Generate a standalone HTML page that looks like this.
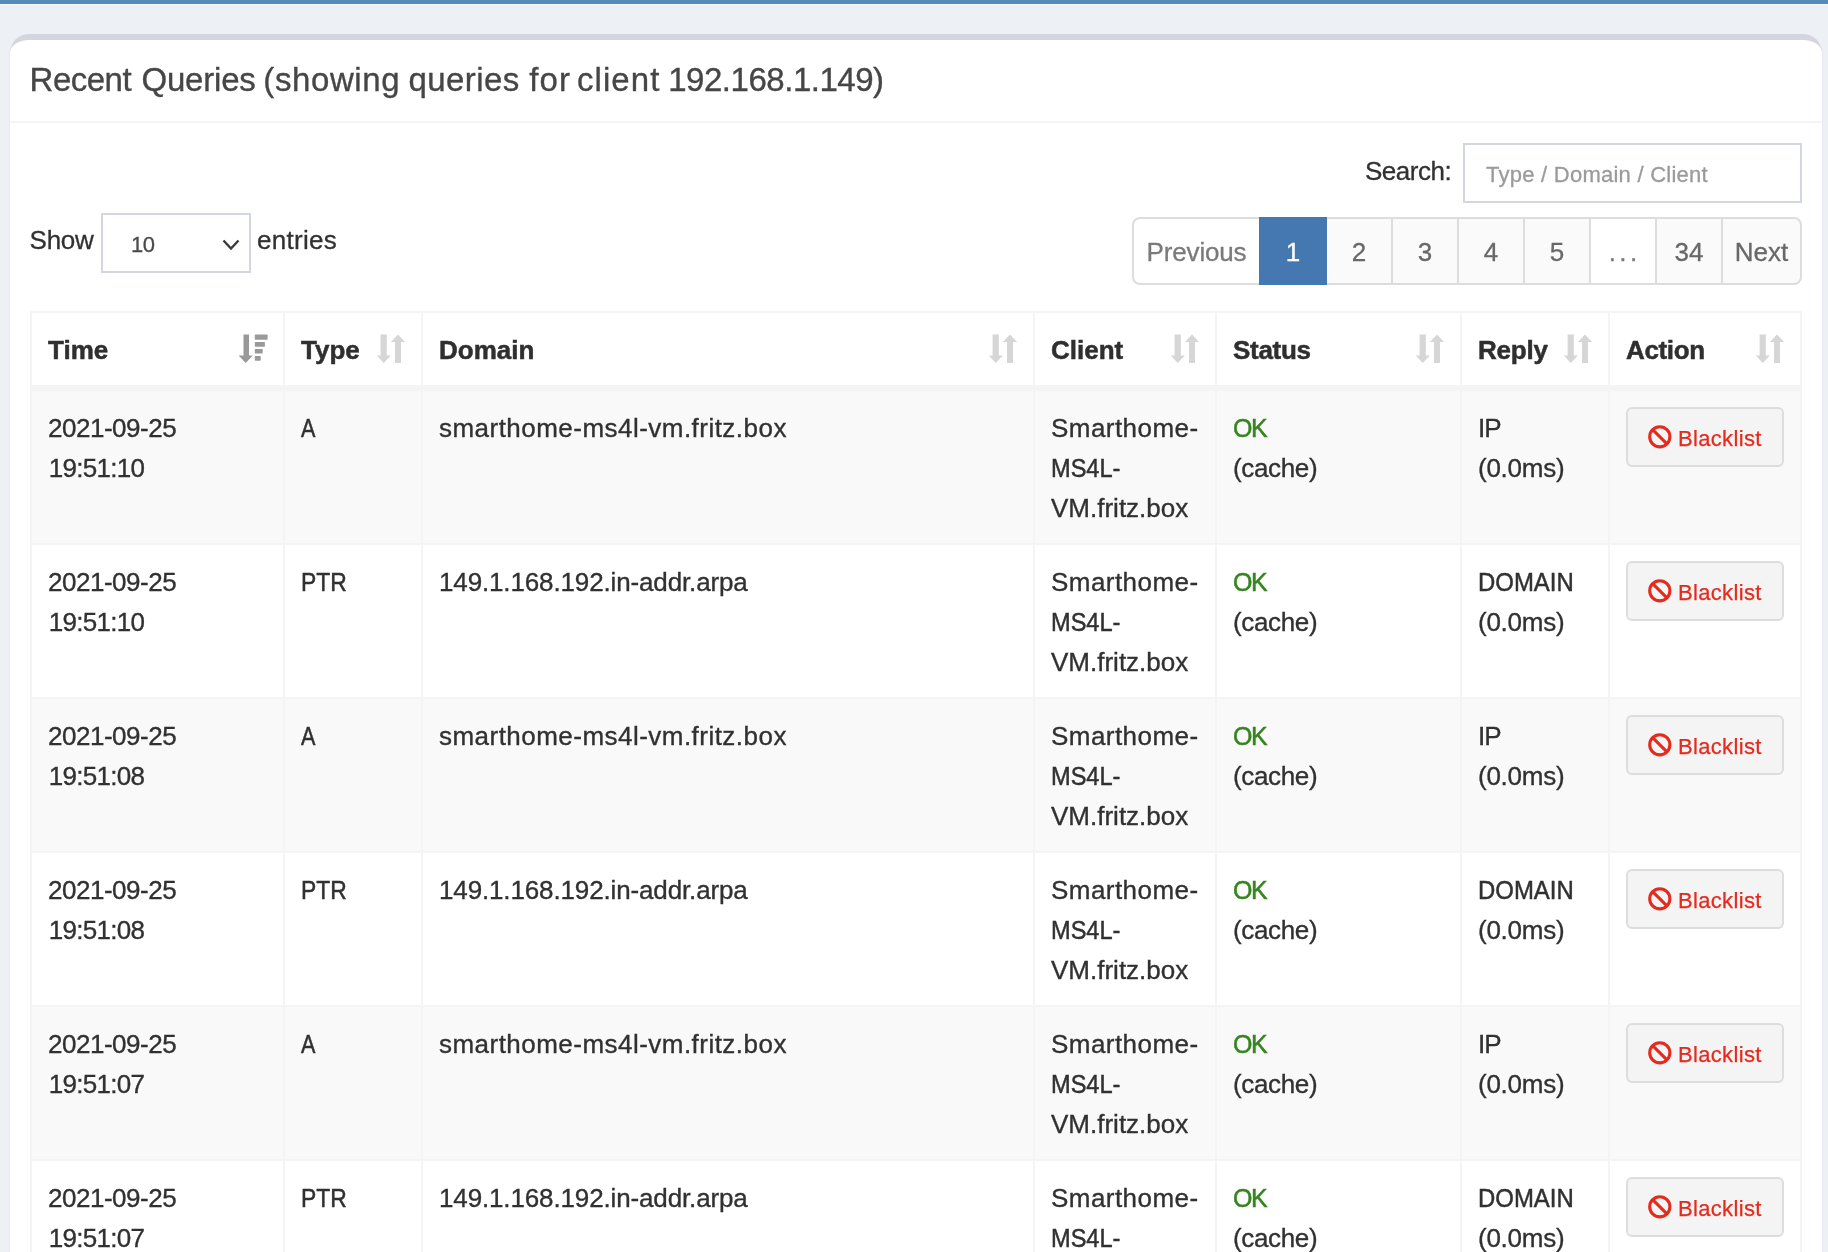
<!DOCTYPE html>
<html>
<head>
<meta charset="utf-8">
<title>Pi-hole - Query Log</title>
<style>
*{box-sizing:border-box;}
html,body{margin:0;padding:0;}
body{width:1828px;height:1252px;overflow:hidden;background:#edf0f5;font-family:"Liberation Sans",sans-serif;font-size:26px;line-height:40px;color:#313131;position:relative;will-change:transform;}
.topbar{position:absolute;left:0;top:0;width:1828px;height:4px;background:#548bb9;}
.topbar:after{content:"";position:absolute;left:0;top:4px;width:100%;height:1px;background:#f6f8fb;}
.box{position:absolute;left:10px;top:34px;width:1812px;height:1300px;background:#fff;border-top:6px solid #d3d6de;border-radius:19px 19px 0 0;box-shadow:0 2px 2px rgba(0,0,0,.1);}
.title{position:absolute;left:0;top:57.5px;font-size:33px;line-height:44px;color:#464646;white-space:nowrap;}
.title span{position:absolute;top:0;-webkit-text-stroke:.35px;}
.hline{position:absolute;left:10px;top:121px;width:1812px;height:2px;background:#f4f4f4;}
.abs{position:absolute;white-space:nowrap;-webkit-text-stroke:.3px;}
/* controls */
.search-lbl{left:1365px;top:151px;letter-spacing:-.5px;}
.search-inp{left:1463px;top:143px;width:339px;height:60px;border:2px solid #d3d6de;background:#fff;}
.search-inp span{position:absolute;left:21px;top:10px;font-size:22px;color:#9a9a9a;letter-spacing:.25px;}
.show-lbl{left:29.6px;top:220px;letter-spacing:-.3px;}
.sel{left:101px;top:213px;width:150px;height:60px;border:2px solid #d3d6de;background:#fff;}
.sel span{position:absolute;left:28px;top:10px;font-size:22px;color:#4a4a4a;letter-spacing:-.5px;}
.sel svg{position:absolute;left:119px;top:24px;}
.entries-lbl{left:257px;top:220px;letter-spacing:.3px;}
/* pagination */
.pag{left:1132px;top:217px;height:68px;display:flex;}
.pag div{height:68px;border:2px solid #dddddd;background:#fafafa;color:#686868;text-align:center;line-height:66px;margin-left:-2px;width:68px;}
.pag div.first{margin-left:0;width:129px;background:#fff;color:#7a7a7a;border-radius:8px 0 0 8px;letter-spacing:-.15px;}
.pag div.act{background:#4578b1;border-color:#4578b1;color:#fff;position:relative;z-index:2;}
.pag div.dis{background:#fff;color:#7a7a7a;}
.pag div.last{width:81px;border-radius:0 8px 8px 0;}
/* table */
table{position:absolute;left:30px;top:311px;width:1772px;border-collapse:separate;border-spacing:0;border:2px solid #f4f4f4;border-right-width:0;border-bottom-width:0;table-layout:fixed;}
th,td{border:2px solid #f4f4f4;border-left-width:0;border-top-width:0;text-align:left;vertical-align:top;padding:17px 16px 15px 16px;font-weight:normal;overflow:hidden;white-space:nowrap;}
th{-webkit-text-stroke:.5px #2f2f2f;font-weight:bold;height:76px;border-bottom-width:4px;position:relative;color:#2f2f2f;}
td{-webkit-text-stroke:.35px;height:154px;border-top-width:2px;border-bottom-width:0;}
tr.odd td{background:#f9f9f9;}
th svg{position:absolute;right:15px;top:21px;}
.ok{color:#35841f;letter-spacing:-1.5px;}
.btn{display:block;width:158px;height:60px;margin-top:-1px;border:2px solid #dddddd;border-radius:6px;background:#f4f4f4;color:#e42b1e;font-size:22px;line-height:56px;position:relative;}
.btn svg{position:absolute;left:20px;top:16px;}
.btn span{position:absolute;left:50px;top:2px;letter-spacing:.33px;-webkit-text-stroke:.25px #e42b1e;}

.t1{letter-spacing:-.48px;}
.t2{letter-spacing:-.7px;position:relative;left:.7px;}
.sx{display:inline-block;transform-origin:0 50%;-webkit-text-stroke-width:.5px;}
.tyA{transform:scaleX(.83);}
.tyP{transform:scaleX(.88);}
.d1{letter-spacing:.47px;}
.d2{letter-spacing:-.14px;}
.c1{letter-spacing:.45px;}
.c2{transform:scaleX(.907);}
.ok{transform:scaleX(.96);}
.s2{letter-spacing:-.35px;}
.r1{letter-spacing:-1px;}
.r2{transform:scaleX(.92);}
.r3{letter-spacing:-.25px;}
.h5{letter-spacing:-.3px;}
.h6{letter-spacing:-.2px;}
.h7{letter-spacing:-.35px;}
.ell{letter-spacing:3.4px;margin-left:3.4px;}
</style>
</head>
<body>
<div class="topbar"></div>
<div class="box"></div>
<div class="title"><span style="left:29.6px;letter-spacing:-0.52px">Recent</span><span style="left:141.5px;letter-spacing:-0.2px">Queries</span><span style="left:263.3px;letter-spacing:0.6px">(showing</span><span style="left:408.5px;letter-spacing:0.42px">queries</span><span style="left:529.3px;letter-spacing:1.15px">for</span><span style="left:576.9px;letter-spacing:1.1px">client</span><span style="left:668.2px;letter-spacing:-0.47px">192.168.1.149)</span></div>
<div class="hline"></div>

<div class="abs search-lbl">Search:</div>
<div class="abs search-inp"><span>Type / Domain / Client</span></div>

<div class="abs show-lbl">Show</div>
<div class="abs sel"><span>10</span><svg width="18" height="12" viewBox="0 0 18 12"><path d="M1.5 1.5 L9 9.5 L16.5 1.5" fill="none" stroke="#3a3a3a" stroke-width="2.4"/></svg></div>
<div class="abs entries-lbl">entries</div>

<div class="abs pag">
<div class="first">Previous</div><div class="act">1</div><div>2</div><div>3</div><div>4</div><div>5</div><div class="dis"><span class="ell">...</span></div><div>34</div><div class="last">Next</div>
</div>

<table>
<colgroup><col style="width:253px"><col style="width:138px"><col style="width:612px"><col style="width:182px"><col style="width:245px"><col style="width:148px"><col style="width:192px"></colgroup>
<thead>
<tr><th><span class="h1">Time</span><svg class="sd" width="30" height="30" viewBox="0 0 30 30"><g transform="translate(0.6,0.5)" fill="#999999"><path d="M4.9 0h5.5v21h3.8l-7.1 7.4l-7.1-7.4h4.9z"/><rect x="16.2" y="0" width="12.8" height="5.2" rx="0.7"/><rect x="16.2" y="7.4" width="10.1" height="4.9" rx="0.7"/><rect x="16.2" y="14.5" width="7.9" height="4.5" rx="0.7"/><rect x="16.2" y="21.6" width="5.9" height="4.6" rx="0.7"/></g></svg></th><th><span class="h2">Type</span><svg class="so" width="30" height="30" viewBox="0 0 30 30"><path transform="translate(0.7,0.5)" fill="#d6d6d6" d="M3.9 0h6.2v21h4.1l-7.1 7.4l-7.1-7.4h3.9z M21.3 0l7.1 7.4h-4.1v21h-6v-21h-4.1z"/></svg></th><th><span class="h3">Domain</span><svg class="so" width="30" height="30" viewBox="0 0 30 30"><path transform="translate(0.7,0.5)" fill="#d6d6d6" d="M3.9 0h6.2v21h4.1l-7.1 7.4l-7.1-7.4h3.9z M21.3 0l7.1 7.4h-4.1v21h-6v-21h-4.1z"/></svg></th><th><span class="h4">Client</span><svg class="so" width="30" height="30" viewBox="0 0 30 30"><path transform="translate(0.7,0.5)" fill="#d6d6d6" d="M3.9 0h6.2v21h4.1l-7.1 7.4l-7.1-7.4h3.9z M21.3 0l7.1 7.4h-4.1v21h-6v-21h-4.1z"/></svg></th><th><span class="h5">Status</span><svg class="so" width="30" height="30" viewBox="0 0 30 30"><path transform="translate(0.7,0.5)" fill="#d6d6d6" d="M3.9 0h6.2v21h4.1l-7.1 7.4l-7.1-7.4h3.9z M21.3 0l7.1 7.4h-4.1v21h-6v-21h-4.1z"/></svg></th><th><span class="h6">Reply</span><svg class="so" width="30" height="30" viewBox="0 0 30 30"><path transform="translate(0.7,0.5)" fill="#d6d6d6" d="M3.9 0h6.2v21h4.1l-7.1 7.4l-7.1-7.4h3.9z M21.3 0l7.1 7.4h-4.1v21h-6v-21h-4.1z"/></svg></th><th><span class="h7">Action</span><svg class="so" width="30" height="30" viewBox="0 0 30 30"><path transform="translate(0.7,0.5)" fill="#d6d6d6" d="M3.9 0h6.2v21h4.1l-7.1 7.4l-7.1-7.4h3.9z M21.3 0l7.1 7.4h-4.1v21h-6v-21h-4.1z"/></svg></th></tr>
</thead>
<tbody id="tb">
<tr class="odd"><td><span class="t1">2021-09-25</span><br><span class="t2">19:51:10</span></td><td><span class="sx tyA">A</span></td><td><span class="d1">smarthome-ms4l-vm.fritz.box</span></td><td><span class="c1">Smarthome-</span><br><span class="sx c2">MS4L-</span><br><span class="c3">VM.fritz.box</span></td><td><span class="sx ok">OK</span><br><span class="s2">(cache)</span></td><td><span class="r1">IP</span><br><span class="r3">(0.0ms)</span></td><td><div class="btn"><svg width="26" height="26" viewBox="0 0 26 26"><circle cx="11.8" cy="11.8" r="10.1" fill="none" stroke="#e42b1e" stroke-width="3.1"/><path d="M4.66 4.66 L18.94 18.94" stroke="#e42b1e" stroke-width="3.1"/></svg><span>Blacklist</span></div></td></tr>
<tr class="even"><td><span class="t1">2021-09-25</span><br><span class="t2">19:51:10</span></td><td><span class="sx tyP">PTR</span></td><td><span class="d2">149.1.168.192.in-addr.arpa</span></td><td><span class="c1">Smarthome-</span><br><span class="sx c2">MS4L-</span><br><span class="c3">VM.fritz.box</span></td><td><span class="sx ok">OK</span><br><span class="s2">(cache)</span></td><td><span class="sx r2">DOMAIN</span><br><span class="r3">(0.0ms)</span></td><td><div class="btn"><svg width="26" height="26" viewBox="0 0 26 26"><circle cx="11.8" cy="11.8" r="10.1" fill="none" stroke="#e42b1e" stroke-width="3.1"/><path d="M4.66 4.66 L18.94 18.94" stroke="#e42b1e" stroke-width="3.1"/></svg><span>Blacklist</span></div></td></tr>
<tr class="odd"><td><span class="t1">2021-09-25</span><br><span class="t2">19:51:08</span></td><td><span class="sx tyA">A</span></td><td><span class="d1">smarthome-ms4l-vm.fritz.box</span></td><td><span class="c1">Smarthome-</span><br><span class="sx c2">MS4L-</span><br><span class="c3">VM.fritz.box</span></td><td><span class="sx ok">OK</span><br><span class="s2">(cache)</span></td><td><span class="r1">IP</span><br><span class="r3">(0.0ms)</span></td><td><div class="btn"><svg width="26" height="26" viewBox="0 0 26 26"><circle cx="11.8" cy="11.8" r="10.1" fill="none" stroke="#e42b1e" stroke-width="3.1"/><path d="M4.66 4.66 L18.94 18.94" stroke="#e42b1e" stroke-width="3.1"/></svg><span>Blacklist</span></div></td></tr>
<tr class="even"><td><span class="t1">2021-09-25</span><br><span class="t2">19:51:08</span></td><td><span class="sx tyP">PTR</span></td><td><span class="d2">149.1.168.192.in-addr.arpa</span></td><td><span class="c1">Smarthome-</span><br><span class="sx c2">MS4L-</span><br><span class="c3">VM.fritz.box</span></td><td><span class="sx ok">OK</span><br><span class="s2">(cache)</span></td><td><span class="sx r2">DOMAIN</span><br><span class="r3">(0.0ms)</span></td><td><div class="btn"><svg width="26" height="26" viewBox="0 0 26 26"><circle cx="11.8" cy="11.8" r="10.1" fill="none" stroke="#e42b1e" stroke-width="3.1"/><path d="M4.66 4.66 L18.94 18.94" stroke="#e42b1e" stroke-width="3.1"/></svg><span>Blacklist</span></div></td></tr>
<tr class="odd"><td><span class="t1">2021-09-25</span><br><span class="t2">19:51:07</span></td><td><span class="sx tyA">A</span></td><td><span class="d1">smarthome-ms4l-vm.fritz.box</span></td><td><span class="c1">Smarthome-</span><br><span class="sx c2">MS4L-</span><br><span class="c3">VM.fritz.box</span></td><td><span class="sx ok">OK</span><br><span class="s2">(cache)</span></td><td><span class="r1">IP</span><br><span class="r3">(0.0ms)</span></td><td><div class="btn"><svg width="26" height="26" viewBox="0 0 26 26"><circle cx="11.8" cy="11.8" r="10.1" fill="none" stroke="#e42b1e" stroke-width="3.1"/><path d="M4.66 4.66 L18.94 18.94" stroke="#e42b1e" stroke-width="3.1"/></svg><span>Blacklist</span></div></td></tr>
<tr class="even"><td><span class="t1">2021-09-25</span><br><span class="t2">19:51:07</span></td><td><span class="sx tyP">PTR</span></td><td><span class="d2">149.1.168.192.in-addr.arpa</span></td><td><span class="c1">Smarthome-</span><br><span class="sx c2">MS4L-</span><br><span class="c3">VM.fritz.box</span></td><td><span class="sx ok">OK</span><br><span class="s2">(cache)</span></td><td><span class="sx r2">DOMAIN</span><br><span class="r3">(0.0ms)</span></td><td><div class="btn"><svg width="26" height="26" viewBox="0 0 26 26"><circle cx="11.8" cy="11.8" r="10.1" fill="none" stroke="#e42b1e" stroke-width="3.1"/><path d="M4.66 4.66 L18.94 18.94" stroke="#e42b1e" stroke-width="3.1"/></svg><span>Blacklist</span></div></td></tr>
</tbody>
</table>
</body>
</html>
